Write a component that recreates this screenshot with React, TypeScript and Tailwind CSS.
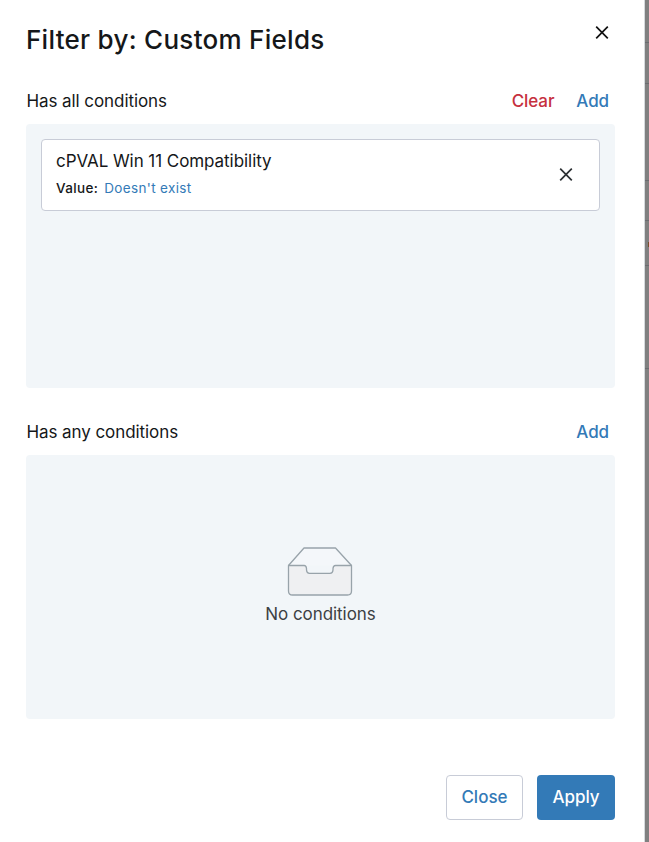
import React from "react";

function Cross({ className }: { className: string }) {
  return (
    <svg className={className} width="14" height="14" viewBox="0 0 14 14" fill="none" stroke="currentColor" strokeWidth="1.7">
      <path d="M1.2 0.7 12.8 12.3M12.8 0.7 1.2 12.3" />
    </svg>
  );
}

function InboxArt() {
  return (
    <svg className="-ml-0.5" width="66" height="50" viewBox="0 0 66 50" fill="none" stroke="#98a3aa" strokeWidth="1.3" strokeLinejoin="round">
      <path d="M1.5 19.5 17 2H48.5L64.5 19.5" fill="#f4f7fa" />
      <path
        d="M1.5 19.5H17.2C19 19.5 19.3 20.5 19.5 22.5V24C19.7 26.5 20.5 27.3 22.5 27.3H43C45 27.3 45.8 26.5 46 24V22.5C46.2 20.5 46.7 19.5 48.5 19.5H64.5V45Q64.5 49 60.5 49H5.5Q1.5 49 1.5 45Z"
        fill="#eff0f2"
      />
    </svg>
  );
}

function SectionHeader({ title, clearable }: { title: string; clearable?: boolean }) {
  return (
    <div className="flex h-6 items-center justify-between pr-1.5 text-[17px] leading-6">
      <h2 className="pl-[0.5px] tracking-[-0.08px] text-[#151719]">{title}</h2>
      <div className="flex gap-[22px] font-medium tracking-[-0.1px]">
        {clearable && <button className="text-[#c6303e]">Clear</button>}
        <button className="text-[#337ab7]">Add</button>
      </div>
    </div>
  );
}

// Vertical offsets between the row dividers of the dimmed page behind the panel.
const rows = ["h-[43px]", "h-[41px]", "h-[97px]", "h-[40px]", "h-[45px]", "h-[103px]"];

export default function App() {
  return (
    <div className="flex h-[842px] w-[649px] overflow-hidden bg-[#808080] font-['Inter','Liberation_Sans',sans-serif]">
      <main className="flex w-[645px] shrink-0 flex-col border-r border-[#d5dadd] bg-white pr-[29px] pl-[26px]">
        <header className="flex h-[89px] items-start justify-between pt-6 pr-1.5">
          <h1 className="text-[26px] leading-8 font-medium tracking-[0.28px] text-[#151719]">Filter by: Custom Fields</h1>
          <button aria-label="Close" className="mt-[2px]">
            <Cross className="text-[#111]" />
          </button>
        </header>
        <SectionHeader title="Has all conditions" clearable />
        <section className="mt-[11px] h-[264px] rounded bg-[#f2f6f9] p-[15px]">
          <div className="flex h-[72px] items-center justify-between rounded border border-[#c8ccd7] bg-white pr-[26px] pl-[14px]">
            <div className="-mt-px">
              <div className="text-[17px] leading-6 tracking-[-0.06px] text-[#151719]">cPVAL Win 11 Compatibility</div>
              <div className="mt-[3px] mb-px flex gap-1.5 text-[13.5px] leading-6 tracking-[0.35px]">
                <span className="font-medium text-[#151719]">Value:</span>
                <span className="text-[#337ab7]">Doesn't exist</span>
              </div>
            </div>
            <button aria-label="Remove">
              <Cross className="text-[#2c3033]" />
            </button>
          </div>
        </section>
        <div className="mt-8">
          <SectionHeader title="Has any conditions" />
        </div>
        <section className="mt-[11px] flex h-[264px] flex-col items-center rounded bg-[#f2f6f9] pt-[91px]">
          <InboxArt />
          <div className="mt-1.5 text-[17px] leading-6 tracking-[-0.06px] text-[#3c4043]">No conditions</div>
        </section>
        <footer className="mt-14 flex justify-end gap-[14px] text-[17px] font-medium">
          <button className="h-[45px] w-[77px] rounded border border-[#c8ccd7] text-[#337ab7]">Close</button>
          <button className="h-[45px] w-[78px] rounded bg-[#337ab7] text-white">Apply</button>
        </footer>
      </main>
      <aside className="relative w-1 shrink-0">
        {rows.map((h, i) => (
          <div key={i} className={`${h} border-b border-[#6b6c70]`} />
        ))}
        <div className="absolute top-[242px] right-0 h-[5px] w-px bg-[#75502d]" />
      </aside>
    </div>
  );
}
